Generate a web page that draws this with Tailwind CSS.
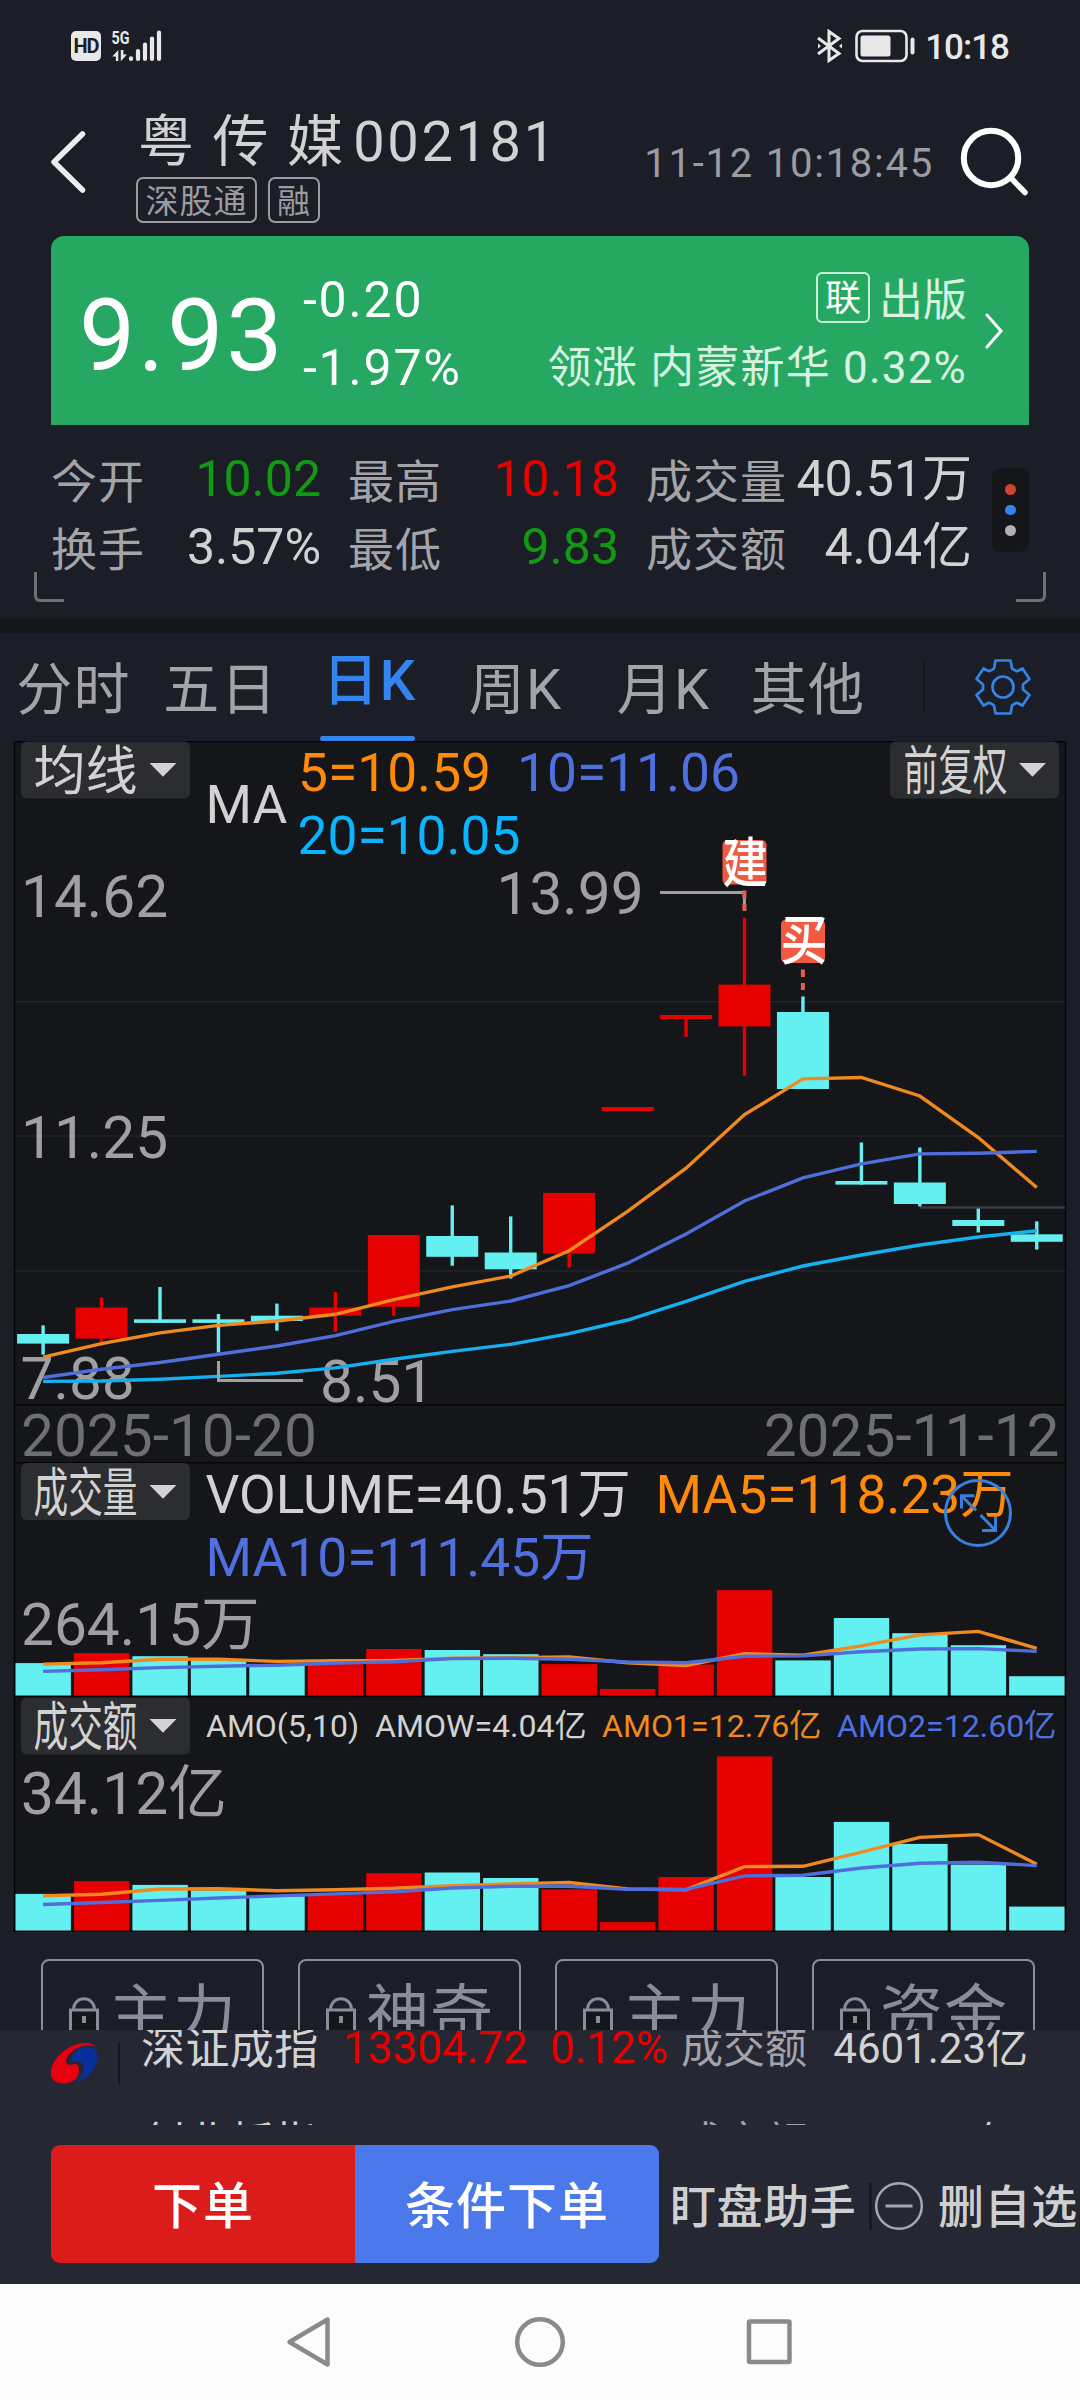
<!DOCTYPE html>
<html lang="zh-CN">
<head>
    <meta charset="UTF-8">
    <meta name="viewport" content="width=device-width, initial-scale=1.0">
    <title>粤传媒 002181</title>
    <script src="https://cdn.jsdelivr.net/npm/@tailwindcss/browser@4"></script>
</head>
<body class="bg-[#1b1e27]">
<div class="w-[1080px] h-[2400px] overflow-hidden flex flex-col bg-[#1b1e27] text-[#d2d2d2] font-['Roboto','Noto_Sans_CJK_SC',sans-serif] whitespace-nowrap">

    <!-- status bar -->
    <div class="h-[92px] shrink-0 flex items-center justify-between pl-[71px] pr-[71px]">
        <div class="flex items-center gap-[11px]">
            <div class="w-[30px] h-[30px] rounded-[5px] bg-[#e8e8e8] text-[#1b1e27] text-[20px] leading-[30px] font-bold text-center tracking-tighter">HD</div>
            <svg class="w-[50px] h-[32px]" viewBox="112 30.5 50 32">
                <text x="111.5" y="44" font-size="18" font-weight="700" textLength="18" lengthAdjust="spacingAndGlyphs" fill="#e8e8e8">5G</text>
                <path d="M118.3 61.5V50.5l-6 6.5h3.600v4.500zM120.800 50.500v11.200l6.200-6.700h-3.600v-4.500z" fill="#e8e8e8"/>
                <path d="M131 58.800v.7M138 51.500v8M145 45v14.500M152 39v20.500M159 33v26.500" stroke="#e8e8e8" stroke-width="4.200" stroke-linecap="round"/>
            </svg>
        </div>
        <div class="flex items-center">
            <svg class="w-[28px] h-[34px] mr-[11px]" viewBox="0 0 28 34" fill="none" stroke="#e8e8e8" stroke-width="3">
                <path d="M2 9L23 24.500 13 31.500V2.500l10 7L2 25"/>
                <path d="M2 14.500v5l3-2.500zM26 14.500v5l-3-2.500z" fill="#e8e8e8" stroke="none"/>
            </svg>
            <svg class="w-[60px] h-[34px] mr-[10px]" viewBox="0 0 60 34">
                <rect x="1.500" y="2" width="50" height="30" rx="6" fill="none" stroke="#e8e8e8" stroke-width="2.600"/>
                <rect x="5.500" y="6.500" width="30" height="21" rx="2.500" fill="#e8e8e8"/>
                <rect x="55.500" y="8.500" width="4" height="17" rx="2" fill="#e8e8e8"/>
            </svg>
            <span class="text-[35px] leading-[35px] font-medium text-[#e8e8e8] mt-[3px] tracking-[-1px]">10:18</span>
        </div>
    </div>

    <!-- title -->
    <header class="h-[144px] shrink-0 flex items-start pl-[50px]">
        <svg class="w-[36px] h-[62px] mt-[39px]" viewBox="0 0 36 62" fill="none" stroke="#ececec" stroke-width="5.500" stroke-linecap="round" stroke-linejoin="round">
            <path d="M32.500 3L4 31l28.500 28"/>
        </svg>
        <div class="ml-[50px] pt-[16px]">
            <div class="h-[68px] leading-[68px] text-[56px] tracking-[2.3px] flex pl-[2px]"><span>粤 传 媒</span><span class="ml-[8px] tracking-[2.600px]">002181</span></div>
            <div class="flex gap-[11px] mt-[1px] text-[33px] leading-[45px] tracking-[1px] text-[#9c9ca0]">
                <span class="w-[121px] h-[46px] border-2 border-[#9c9ca0] rounded-[7px] text-center">深股通</span>
                <span class="w-[52px] h-[46px] border-2 border-[#9c9ca0] rounded-[7px] text-center">融</span>
            </div>
        </div>
        <div class="ml-auto mt-[44px] leading-[56px] text-[40px] tracking-[1.75px] text-[#9c9ca0]">11-12 10:18:45</div>
        <svg class="w-[70px] h-[70px] ml-[26px] mr-[50px] mt-[35px]" viewBox="960 127 70 70" fill="none" stroke="#fff">
            <circle cx="991" cy="158" r="27.200" stroke-width="6"/>
            <path d="M1011 178l14 14.500" stroke-width="5.500" stroke-linecap="round"/>
        </svg>
    </header>

    <!-- price card -->
    <div class="w-[978px] h-[189px] ml-[51px] shrink-0 rounded-t-[13px] bg-[#26a862] text-white flex items-center">
        <div class="pl-[28px] pt-[11px] text-[100px] leading-[100px] tracking-[2.8px] w-[252px]">9.93</div>
        <div class="pt-[6px] text-[50px] leading-[68px] tracking-[1.8px]">
            <div>-0.20</div>
            <div>-1.97%</div>
        </div>
        <div class="ml-auto mr-[18px] pt-[7px] text-[44px] tracking-[1.2px] text-[#d8f3e2]">
            <div class="flex items-center justify-end gap-[9px] h-[68px]">
                <span class="w-[54px] h-[51px] mt-[-6px] border-2 border-[#c9f0d8] rounded-[6px] text-[36px] leading-[50px] tracking-normal text-center text-white">联</span>
                <span class="tracking-normal mt-[2px]">出版</span>
            </div>
            <div class="leading-[68px] text-right">领涨 内蒙新华 0.32%</div>
        </div>
        <svg class="w-[18px] h-[36px] mr-[26px]" viewBox="0 0 18 36" fill="none" stroke="#fff" stroke-width="3" stroke-linecap="round"><path d="M2 2l14 16L2 34"/></svg>
    </div>

    <!-- quote figures -->
    <div class="h-[194px] shrink-0 relative">
        <div class="pl-[51px] pt-[20px] flex text-[50px] leading-[68px]">
            <div class="w-[101px] text-[46px] text-[#a4a4a8] tracking-[1px] pt-[3px]"><div>今开</div><div>换手</div></div>
            <div class="w-[169px] text-right"><div class="text-[#129a12]">10.02</div><div>3.57%</div></div>
            <div class="w-[120px] ml-[27px] text-[46px] text-[#a4a4a8] tracking-[1px] pt-[3px]"><div>最高</div><div>最低</div></div>
            <div class="w-[151px] text-right"><div class="text-[#e60000]">10.18</div><div class="text-[#129a12]">9.83</div></div>
            <div class="w-[150px] ml-[27px] text-[46px] text-[#a4a4a8] tracking-[1px] pt-[3px]"><div>成交量</div><div>成交额</div></div>
            <div class="w-[176px] text-right"><div>40.51万</div><div>4.04亿</div></div>
            <div class="w-[37px] h-[84px] ml-[20px] mt-[23px] rounded-[9px] bg-[#15161a] flex flex-col items-center justify-center gap-[10px]">
                <i class="size-[10.500px] rounded-full bg-[#cb4530]"></i>
                <i class="size-[10.500px] rounded-full bg-[#3484f0]"></i>
                <i class="size-[10.500px] rounded-full bg-[#b2b2b6]"></i>
            </div>
        </div>
        <i class="absolute left-[34px] top-[147px] w-[30px] h-[30px] border-l-3 border-b-3 border-[#6e7076] rounded-bl-[6px]"></i>
        <i class="absolute left-[1016px] top-[147px] w-[30px] h-[30px] border-r-3 border-b-3 border-[#6e7076] rounded-br-[6px]"></i>
    </div>
    <div class="h-[14px] shrink-0 bg-[#15161a]"></div>

    <!-- period tabs -->
    <nav class="h-[108px] shrink-0 flex items-center text-[56px] leading-[118px] tracking-[1.2px] text-[#a4a4a8] text-center">
        <span class="w-[147px] pt-[5px]">分时</span>
        <span class="w-[147px] pt-[5px]">五日</span>
        <span class="w-[147px] h-[108px] flex flex-col items-center justify-between text-[#3484f0] font-medium"><span class="leading-[96px] h-[98px] pl-[4px]">日K</span><i class="w-[95px] h-[5px] rounded-full bg-[#3484f0]"></i></span>
        <span class="w-[147px] pt-[5px] pl-[2px]">周K</span>
        <span class="w-[149px] pt-[5px] pl-[2px]">月K</span>
        <span class="w-[142px] pt-[5px]">其他</span>
        <i class="w-[2px] h-[51px] ml-[44px] bg-[#15161a]"></i>
        <svg class="w-[58px] h-[58px] ml-[49px]" viewBox="-29 -29 58 58" fill="none" stroke="#3484e6" stroke-width="2.700" stroke-linejoin="round">
            <path d="M-7.500 -26.500H7.500L9 -18.500Q11.500 -16.500 14 -15.800L19.500 -18.500L26.500 -8L20 -2.500V2.500L26.500 8L19.500 18.500L14 15.800Q11.500 16.500 9 18.500L7.500 26.500H-7.500L-9 18.500Q-11.500 16.500 -14 15.800L-19.500 18.500L-26.500 8L-20 2.500V-2.500L-26.500 -8L-19.500 -18.500L-14 -15.800Q-11.500 -16.500 -9 -18.500Z"/>
            <circle r="10.500"/>
        </svg>
    </nav>

    <!-- charts: k-line, volume, amount -->
    <svg class="w-[1080px] h-[1191px] shrink-0" viewBox="0 741 1080 1191" font-size="53.3">
        <rect x="14.500" y="741.500" width="1051" height="1190" fill="#15161a" stroke="#050506" stroke-width="1.500"/>
        <path d="M15 1001.800H1065M15 1136H1065M15 1271H1065" stroke="#22242a" stroke-width="1.500"/>
        <path d="M15 1405H1065M15 1462.700H1065M15 1696.500H1065" stroke="#050506" stroke-width="1.500"/>
        <path d="M920 1207.500H1065" stroke="#3a3b40" stroke-width="2.500"/>

        <g fill="#2c2d31">
            <rect x="21" y="741.500" width="169" height="57" rx="6"/>
            <rect x="890" y="741.500" width="169" height="57" rx="6"/>
            <rect x="21" y="1463" width="169" height="57" rx="6"/>
            <rect x="21" y="1697.500" width="169" height="57" rx="6"/>
        </g>
        <g fill="#d2d2d2">
            <path d="M149.500 763h27l-13.500 13.700zM1019 763h27l-13.500 13.700zM149.500 1485h27l-13.500 13.700zM149.500 1719h27l-13.500 13.700z"/>
            <text x="33.500" y="789.500" textLength="104" lengthAdjust="spacingAndGlyphs">均线</text>
            <text x="903.500" y="790" textLength="104" lengthAdjust="spacingAndGlyphs">前复权</text>
            <text x="33.500" y="1511.500" textLength="104" lengthAdjust="spacingAndGlyphs">成交量</text>
            <text x="33.500" y="1746" textLength="104" lengthAdjust="spacingAndGlyphs">成交额</text>
            <text x="205.500" y="823">MA</text>
            <text x="205.500" y="1513">VOLUME=40.51万</text>
            <text x="206" y="1736.800" font-size="32">AMO(5,10)</text>
            <text x="375" y="1736.800" font-size="32.1">AMOW=4.04亿</text>
        </g>
        <g fill="#ff8a0a">
            <text x="298" y="791">5=10.59</text>
            <text x="655.500" y="1513">MA5=118.23万</text>
            <text x="602" y="1736.800" font-size="32.1" fill="#f08a1e">AMO1=12.76亿</text>
        </g>
        <g fill="#5070e0">
            <text x="517" y="791">10=11.06</text>
            <text x="205.500" y="1576.300">MA10=111.45万</text>
            <text x="837" y="1736.800" font-size="32.1">AMO2=12.60亿</text>
        </g>
        <text x="297.500" y="854" fill="#0ab4ff">20=10.05</text>

        <g id="bars"></g>

        <g fill="#a0a0a3" font-size="58.6">
            <text x="21" y="917">14.62</text>
            <text x="21" y="1157.500">11.25</text>
            <text x="20.500" y="1398.600">7.88</text>
            <text x="320" y="1402">8.51</text>
            <text x="496.500" y="914.300">13.99</text>
            <text x="21" y="1645.200">264.15万</text>
            <text x="21" y="1814">34.12亿</text>
        </g>
        <g fill="#6e6f74" font-size="58.6">
            <text x="21" y="1456">2025-10-20</text>
            <text x="1059.500" y="1456" text-anchor="end">2025-11-12</text>
        </g>

        <g id="lines" fill="none" stroke-width="3.4"></g>

        <g fill="none" stroke="#a0a0a3" stroke-width="3">
            <path d="M660 892.500H746M744.400 892V904"/>
            <path d="M218.500 1361V1380.500H303"/>
        </g>
        <path d="M744.400 890.500v7.500M744.400 904v7M802.900 969.500v7.500M802.900 983v7" stroke="#e0604e" stroke-width="4"/>
        <rect x="722.500" y="840" width="44" height="44.500" rx="5" fill="#f05a42"/>
        <rect x="781" y="919.500" width="44" height="43.500" rx="5" fill="#f05a42"/>
        <g fill="#fff" font-size="54" font-weight="500">
            <text x="722.500" y="882.500" textLength="45.500" lengthAdjust="spacingAndGlyphs">建</text>
            <text x="780.500" y="959.500" textLength="47" lengthAdjust="spacingAndGlyphs">买</text>
        </g>

        <g fill="none" stroke="#3a7ede" stroke-width="3">
            <circle cx="978" cy="1513" r="32.500"/>
            <path d="M974.500 1495.800H961.500V1508.500M961.500 1495.800L976 1510.500M982 1530.500H995.500V1517M995.500 1530.500L980.500 1515"/>
        </g>
    </svg>

    <!-- locked indicators -->
    <div class="h-[98px] shrink-0 overflow-hidden pt-[27px] pl-[41px] flex gap-[34px] text-[#8a8b9b]" id="locked"></div>

    <!-- index ticker -->
    <div class="h-[95px] shrink-0 bg-[#252733] flex overflow-hidden">
        <svg class="w-[47px] h-[47px] ml-[51px] mt-[10px]" viewBox="0 0 140 140">
            <path d="M138 23C120 0 68 5 32 38C2 65 -8 98 5 117C22 138 66 132 79 108C86 93 84 77 76 72C66 68 58 80 47 70C38 58 58 30 88 20C106 13 126 14 138 23Z" fill="#e80010"/>
            <path d="M138 42C136 20 104 12 82 27C66 38 60 52 62 62C68 72 84 60 94 70C104 85 92 110 74 127C108 118 142 82 138 42Z" fill="#08309a"/>
        </svg>
        <i class="w-[2px] h-[41px] ml-[20px] mt-[13px] bg-[#15161a]"></i>
        <div class="-mt-[30px] text-[44px] leading-[97px] grid grid-cols-[202px_207px_131px_146px_201px] ml-[21px]">
            <span class="tracking-[0.4px] pt-[1px]">深证成指</span>
            <span class="text-[#e60000]">13304.72</span>
            <span class="text-[#e60000]">0.12%</span>
            <span class="text-[42px] text-[#a4a4a8]">成交额</span>
            <span class="text-[42px] text-right">4601.23亿</span>
            <span class="tracking-[0.4px] -mt-[2px]">创业板指</span>
            <span></span>
            <span></span>
            <span class="text-[42px] text-[#a4a4a8] -mt-[4px]">成交额</span>
            <span class="text-[42px] text-right pr-[10px] -mt-[4px]">亿</span>
        </div>
    </div>

    <!-- actions -->
    <div class="h-[159px] shrink-0 bg-[#252733] flex pt-[20px] pl-[51px]">
        <div class="w-[304px] h-[118px] rounded-l-[9px] bg-[#dc1b1b] text-white text-[50px] leading-[125px] font-medium text-center tracking-[1px]">下单</div>
        <div class="w-[304px] h-[118px] rounded-r-[9px] bg-[#4b78ea] text-white text-[50px] leading-[125px] font-medium text-center tracking-[1px]">条件下单</div>
        <div class="flex items-center h-[122px] text-[46px] tracking-[0.6px] font-medium text-[#cfcfcf]">
            <span class="w-[199px] pl-[11px] pt-[3px]">盯盘助手</span>
            <i class="w-[3px] h-[47px] ml-[11px] bg-[#17181d]"></i>
            <svg class="w-[50px] h-[50px] ml-[2px]" viewBox="0 0 50 50" fill="none" stroke="#a8a8ac" stroke-width="2.500"><circle cx="25" cy="25" r="22.800"/><path d="M11.500 25h27" stroke-width="3"/></svg>
            <span class="ml-[14px] pt-[3px]">删自选</span>
        </div>
    </div>

    <!-- system navigation -->
    <div class="h-[116px] shrink-0 bg-[#fcfcfc]">
        <svg class="w-[1080px] h-[116px]" viewBox="0 2284 1080 116" fill="none" stroke="#8a8a8a" stroke-width="4.500" stroke-linejoin="round">
            <path d="M289.500 2342L327.500 2319.500V2364.500Z"/>
            <circle cx="540" cy="2342" r="22.800"/>
            <rect x="749" y="2321.500" width="40.500" height="40.500" rx="1"/>
        </svg>
    </div>
</div>

<script>
const RED = '#e60000';
const CYAN = '#64f0f0';
const colors = 'crcccrrccrrrrccccc'.split('').map(c => c === 'r' ? RED : CYAN);
const cx = i => 43.1 + 58.45 * i;

// body top, body bottom, wick top, wick bottom
const candles = [
    [1334, 1343.6, 1325.4, 1354.6], [1307.5, 1338.6, 1297.5, 1345.7], [1319.3, 1322.9, 1287, 1323],
    [1319.3, 1322.9, 1314, 1352.5], [1315.7, 1321, 1303.6, 1330.7], [1307.5, 1315.7, 1292, 1331.8],
    [1235, 1306.8, 1235, 1315.7], [1236, 1256.8, 1205.4, 1265.7], [1252.5, 1269.3, 1216.4, 1278.6],
    [1192.9, 1253.6, 1193, 1267.5], [1107, 1111, 1107, 1111], [1015, 1019, 1015, 1036.8],
    [984.6, 1026.4, 917.9, 1075.7], [1012, 1089, 996.4, 1089], [1181, 1184.6, 1142.5, 1184.6],
    [1182.5, 1204, 1147.5, 1206.4], [1220, 1226, 1208.6, 1232.5], [1234.3, 1241.8, 1221.4, 1249.6]
];
const volume = [1663.1, 1653.1, 1656.2, 1660.7, 1665.5, 1663.5, 1649, 1650, 1654.2, 1664.1, 1689, 1664.5, 1590.1, 1660.4, 1618, 1633.2, 1645.2, 1676.2];
const amount = [1893.9, 1881.1, 1884.9, 1890.4, 1896.3, 1894.5, 1873.2, 1872.5, 1878, 1889.4, 1922.1, 1877, 1756.4, 1877, 1821.9, 1843.9, 1864.6, 1906.6];

const lines = [
    ['#f08a1e', [1357.1, 1343.6, 1332.9, 1325.4, 1321, 1314.3, 1299.6, 1286.8, 1276, 1250.7, 1211.4, 1168.2, 1114.6, 1078.9, 1077.5, 1096, 1137.5, 1187.5]],
    ['#4f6edc', [1377.5, 1369.3, 1362.5, 1354.3, 1346, 1335.7, 1321.4, 1309.6, 1301, 1285.7, 1263.2, 1233.9, 1201, 1177.9, 1163.9, 1153.9, 1153.2, 1151.4]],
    ['#14b0f0', [1381.4, 1381, 1379.3, 1376.4, 1373.2, 1367.9, 1359.3, 1351.4, 1344.3, 1333.6, 1320, 1301.4, 1281.4, 1266, 1255, 1245, 1237, 1230.7]],
    ['#f08a1e', [1664.1, 1662.8, 1659.3, 1659.3, 1661.4, 1660.7, 1660.4, 1658.3, 1657.6, 1656.9, 1662.8, 1665.5, 1653.8, 1655.2, 1645.9, 1634.9, 1631.4, 1648.3]],
    ['#4f6edc', [1671.4, 1669.7, 1667.6, 1666.2, 1665.2, 1663.1, 1661.7, 1658.6, 1658.3, 1659.3, 1662, 1662.8, 1656.2, 1655.9, 1651.7, 1649, 1648.6, 1651.4]],
    ['#f08a1e', [1895.9, 1894.2, 1889, 1888.7, 1890.8, 1889.7, 1888.3, 1885.6, 1883.9, 1882.5, 1889, 1889.7, 1866.6, 1866.3, 1852.2, 1837.4, 1834.6, 1864.2]],
    ['#4f6edc', [1904.5, 1902.5, 1900.4, 1898, 1895.9, 1893.9, 1891.8, 1888, 1886.3, 1886.3, 1889.4, 1889.4, 1875.9, 1875.3, 1868, 1863.2, 1862.2, 1865.6]]
];

let bars = '';
colors.forEach((color, i) => {
    const x = cx(i);
    const [top, bottom, high, low] = candles[i];
    bars += `
        <rect x="${x - 26}" y="${top}" width="52" height="${bottom - top}" fill="${color}"/>
        <rect x="${x - 1.7}" y="${high}" width="3.4" height="${low - high}" fill="${color}"/>
        <rect x="${x - 27.6}" y="${volume[i]}" width="55.4" height="${1695.5 - volume[i]}" fill="${color}"/>
        <rect x="${x - 27.6}" y="${amount[i]}" width="55.4" height="${1930.5 - amount[i]}" fill="${color}"/>
    `;
});
document.getElementById('bars').innerHTML = bars;

document.getElementById('lines').innerHTML = lines.map(([color, ys]) =>
    `<polyline stroke="${color}" points="${ys.map((y, i) => cx(i) + ',' + y).join(' ')}"/>`
).join('');

document.getElementById('locked').innerHTML = ['主力', '神奇', '主力', '资金'].map(name => `
    <div class="w-[223px] h-[120px] shrink-0 border-2 border-[#8a8b9b] rounded-[8px] flex items-start pl-[26px]">
        <svg class="w-[30px] h-[44px] mt-[36px]" viewBox="0 0 30 44" fill="none" stroke="#8a8b9b" stroke-width="3">
            <path d="M4.500 13C4.500 -2 25.500 -2 25.500 13"/>
            <rect x="1.500" y="13" width="27" height="26" fill="#15161a"/>
            <path d="M15 19v7" stroke-width="4"/>
        </svg>
        <span class="text-[63px] leading-[92px] tracking-[1px] ml-[10px] mt-[8px]">${name}</span>
    </div>
`).join('');
</script>
</body>
</html>
